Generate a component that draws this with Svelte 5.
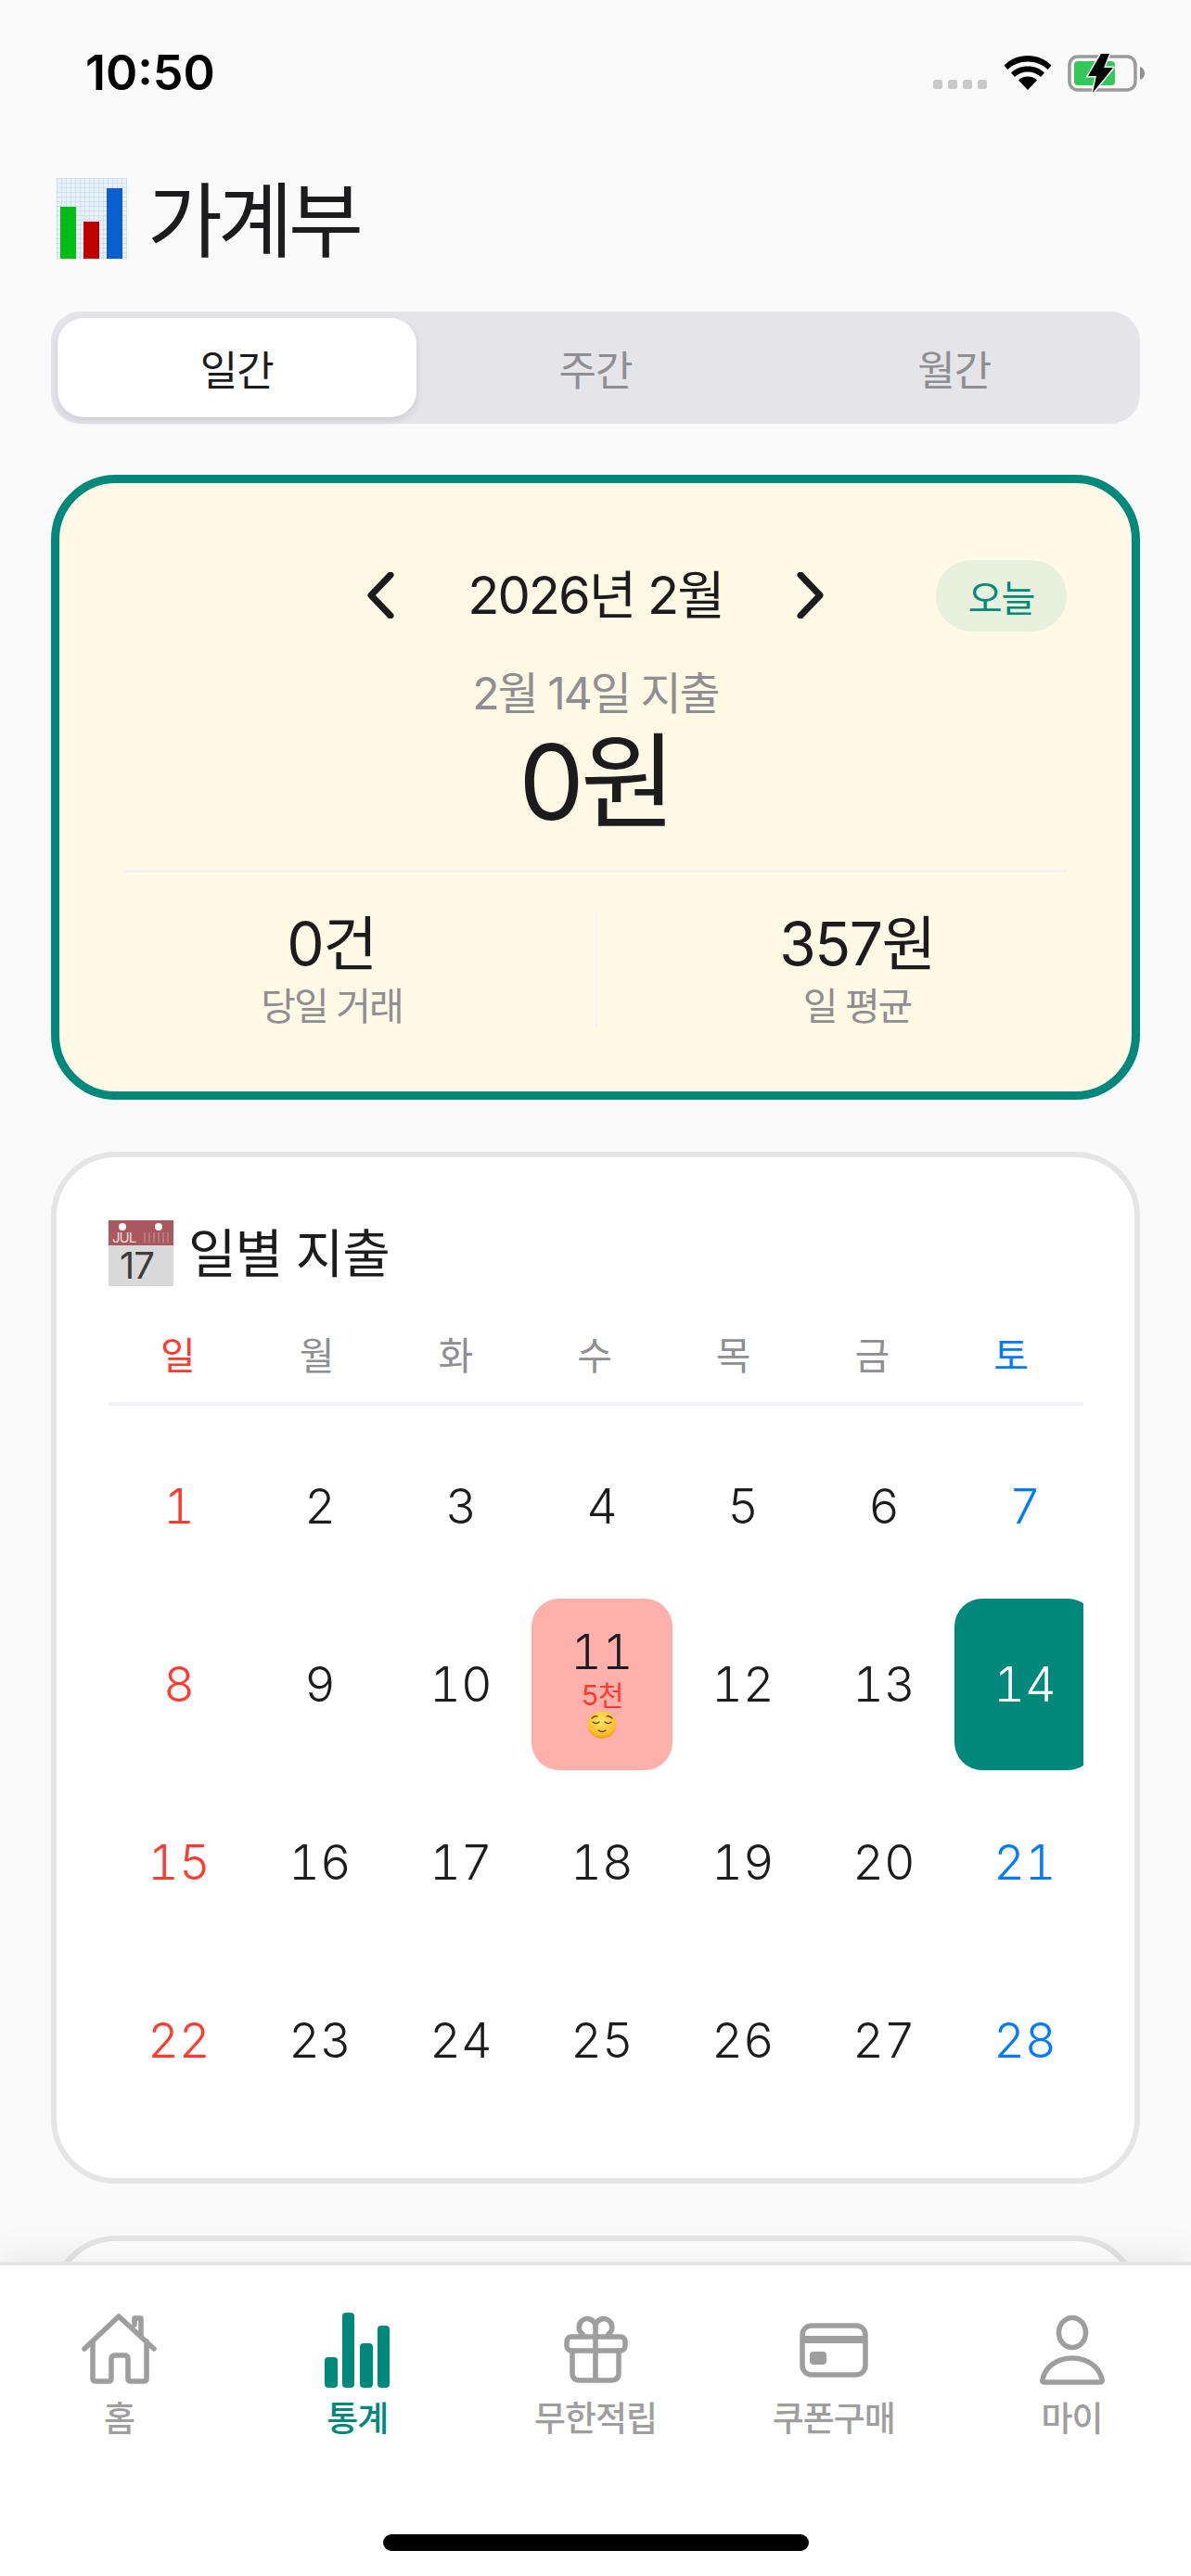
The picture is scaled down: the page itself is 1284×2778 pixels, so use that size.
<script>
  const tabs = ['일간', '주간', '월간'];
  const weekdays = ['일', '월', '화', '수', '목', '금', '토'];
  const days = Array.from({ length: 28 }, (_, i) => i + 1);
  const navItems = [
    { key: 'home', label: '홈' },
    { key: 'stats', label: '통계', active: true },
    { key: 'gift', label: '무한적립' },
    { key: 'card', label: '쿠폰구매' },
    { key: 'my', label: '마이' }
  ];

  function dayClass(d) {
    const col = (d - 1) % 7;
    let c = 'day';
    if (col === 0) c += ' sun';
    if (col === 6) c += ' sat';
    if (d === 11) c += ' spent';
    if (d === 14) c += ' selected';
    return c;
  }
</script>

<div class="screen">
  <div class="status">
    <span class="time">10:50</span>
    <div class="status-icons">
      <div class="signal"><i></i><i></i><i></i><i></i></div>
      <svg class="wifi" width="52" height="38" viewBox="0 0 52 38">
        <path d="M0.5 11.5C7 5 16 1 26 1s19 4 25.500 10.500L47.500 16C42 10.500 34.500 7.500 26 7.500S10 10.500 4.500 16z" fill="#000"/>
        <path d="M8 19.500C12.500 15 19 12.500 26 12.500s13.500 2.500 18 7L40 24c-3.500-3.500-8.500-5.500-14-5.500S15.500 20.500 12 24z" fill="#000"/>
        <path d="M16 27.500c2.500-2.500 6-4 10-4s7.500 1.500 10 4L26 38z" fill="#000"/>
      </svg>
      <svg class="battery" width="84" height="42" viewBox="0 0 84 42">
        <rect x="2" y="3" width="71" height="36" rx="9" fill="none" stroke="#9a9a9a" stroke-width="3.500"/>
        <rect x="7" y="8" width="44" height="26" rx="4" fill="#34c759"/>
        <path d="M78 14c3 1 5 3.500 5 7s-2 6-5 7z" fill="#8f8f8f"/>
        <path d="M36 0 22 24h9L27 42l22-27h-10l6-15z" fill="#000" stroke="#fafafa" stroke-width="3" paint-order="stroke"/>
      </svg>
    </div>
  </div>

  <h1 class="page-title">
    <svg width="76" height="88" viewBox="0 0 76 88">
      <defs>
        <pattern id="grid" width="5" height="5" patternUnits="userSpaceOnUse">
          <rect width="5" height="5" fill="#e8f0f8"/>
          <path d="M0 0H5M0 0V5" stroke="#bcd3ea" stroke-width="1"/>
        </pattern>
      </defs>
      <rect width="76" height="88" fill="url(#grid)"/>
      <rect x="4" y="31" width="17" height="56" fill="#03bd17"/>
      <rect x="29" y="47" width="17" height="40" fill="#bd0000"/>
      <rect x="54" y="11" width="17" height="76" fill="#0a5fd0"/>
    </svg>
    <span>가계부</span>
  </h1>

  <div class="tabs">
    {#each tabs as t, i}
      <div class="tab" class:active={i === 0}>{t}</div>
    {/each}
  </div>

  <section class="summary">
    <div class="month-row">
      <svg class="chev" width="30" height="50" viewBox="0 0 30 50"><path d="M26 3 5 25l21 22" /></svg>
      <span class="month">2026년 2월</span>
      <svg class="chev" width="30" height="50" viewBox="0 0 30 50"><path d="M4 3l21 22L4 47" /></svg>
      <button class="today">오늘</button>
    </div>
    <div class="sum-label">2월 14일 지출</div>
    <div class="sum-value">0원</div>
    <div class="stats">
      <div class="stat">
        <strong>0건</strong>
        <span>당일 거래</span>
      </div>
      <div class="stat">
        <strong>357원</strong>
        <span>일 평균</span>
      </div>
    </div>
  </section>

  <section class="card calendar">
    <h2>
      <svg width="70" height="71" viewBox="0 0 70 71" overflow="visible">
        <rect width="70" height="71" fill="#d9d9d9"/>
        <rect width="70" height="27" fill="#a9585f"/>
        <circle cx="15" cy="7" r="4" fill="#fff"/>
        <circle cx="54" cy="7" r="4" fill="#fff"/>
        <text x="4" y="24" font-size="15" fill="#f1dcdc" font-family="Inter, sans-serif">JUL</text>
        <g stroke="#c99a9d" stroke-width="1">
          <path d="M39 13v11M44 13v11M49 13v11M54 13v11M59 13v11M64 13v11"/>
        </g>
        <text x="12" y="63" font-size="40" fill="#3c3c3c" font-family="Inter, sans-serif">17</text>
      </svg>
      <span>일별 지출</span>
    </h2>
    <div class="week-head">
      {#each weekdays as w, i}
        <span class:sun={i === 0} class:sat={i === 6}>{w}</span>
      {/each}
    </div>
    <div class="day-clip">
      <div class="days">
        {#each days as d}
          <div class={dayClass(d)}>
            <span class="num">{d}</span>
            {#if d === 11}
              <span class="amount">5천</span>
              <svg class="face" width="32" height="30" viewBox="0 0 32 30">
                <defs>
                  <radialGradient id="faceFill" cx="50%" cy="35%" r="70%">
                    <stop offset="0%" stop-color="#ffe46a"/>
                    <stop offset="70%" stop-color="#fcc02e"/>
                    <stop offset="100%" stop-color="#ef8f10"/>
                  </radialGradient>
                </defs>
                <ellipse cx="16" cy="15" rx="15.500" ry="15" fill="url(#faceFill)"/>
                <path d="M6 12q3.500 3 7 0M19 12q3.500 3 7 0M5 8q3-3 6-2M27 8q-3-3-6-2M12 21q4 3 8 0" fill="none" stroke="#6b4410" stroke-width="1.300" stroke-linecap="round"/>
              </svg>
            {/if}
          </div>
        {/each}
      </div>
    </div>
  </section>

  <section class="card next-card"></section>

  <nav class="bottom-nav">
    <div class="nav-items">
      {#each navItems as item}
        <div class="nav-item" class:active={item.active}>
          <div class="nav-icon">
            {#if item.key === 'home'}
              <svg width="84" height="84" viewBox="0 0 84 84">
                <path d="M5 41 42 6l38 35M14 33v40q0 3 3 3h14q3 0 3-3V52q0-4 4-4h10q4 0 4 4v21q0 3 3 3h14q3 0 3-3V33M59 15V8h7v20" />
              </svg>
            {:else if item.key === 'stats'}
              <svg width="84" height="84" viewBox="0 0 84 84" class="fill">
                <rect x="7" y="50" width="14" height="33" rx="4"/>
                <rect x="26" y="2" width="13" height="81" rx="4"/>
                <rect x="45" y="35" width="14" height="48" rx="4"/>
                <rect x="64" y="16" width="13" height="67" rx="4"/>
              </svg>
            {:else if item.key === 'gift'}
              <svg width="84" height="84" viewBox="0 0 84 84">
                <rect x="11" y="28" width="63" height="15" rx="5"/>
                <path d="M17 43v24q0 8 8 8h34q8 0 8-8V43M42 16v59M42 16a9 9 0 1 0-14 9M42 16a9 9 0 1 1 14 9"/>
              </svg>
            {:else if item.key === 'card'}
              <svg width="84" height="84" viewBox="0 0 84 84">
                <rect x="8" y="16" width="68" height="53" rx="10"/>
                <path d="M8 31h68" stroke-width="8" stroke-linecap="butt"/>
                <rect x="16" y="44" width="18" height="14" rx="4" class="solid"/>
              </svg>
            {:else}
              <svg width="84" height="84" viewBox="0 0 84 84">
                <ellipse cx="42" cy="23.500" rx="14.500" ry="16"/>
                <path d="M12 77q-3 0-2-3c3-14 16-23 32-23s29 9 32 23q1 3-2 3z"/>
              </svg>
            {/if}
          </div>
          <span>{item.label}</span>
        </div>
      {/each}
    </div>
    <div class="home-bar"></div>
  </nav>
</div>

<style>
  :global(body) {
    margin: 0;
    background: #fafafa;
  }

  .screen {
    position: relative;
    width: 1284px;
    height: 2778px;
    overflow: hidden;
    background: #fafafa;
    color: #1c1c1e;
    font-family: Inter, 'Noto Sans CJK KR', sans-serif;
  }

  .status {
    display: flex;
    justify-content: space-between;
    align-items: flex-start;
    height: 192px;
    box-sizing: border-box;
    padding: 50px 49px 0 92px;
  }

  .time {
    font-size: 52px;
    line-height: 58px;
    font-weight: 600;
    color: #000;
  }

  .status-icons {
    display: flex;
    align-items: flex-start;
    padding-top: 8px;
  }

  .signal {
    display: flex;
    gap: 6px;
    margin: 28px 18px 0 0;
  }

  .signal i {
    width: 10px;
    height: 10px;
    border-radius: 3px;
    background: #c9c9c9;
  }

  .wifi {
    margin: 1px 17px 0 0;
  }

  .page-title {
    display: flex;
    align-items: center;
    gap: 22px;
    margin: 0 0 56px 61px;
    height: 88px;
    font-size: 88px;
    font-weight: 400;
    letter-spacing: -5px;
    color: #1c1c1e;
  }

  .page-title span {
    padding-bottom: 10px;
  }

  .page-title svg,
  .card h2 svg {
    flex: none;
  }

  .tabs {
    display: grid;
    grid-template-columns: repeat(3, 1fr);
    margin: 0 55px;
    padding: 7px;
    height: 121px;
    box-sizing: border-box;
    background: #e4e4e9;
    border-radius: 32px;
  }

  .tab {
    display: flex;
    align-items: center;
    justify-content: center;
    font-size: 44px;
    letter-spacing: -1px;
    color: #8e8e93;
    border-radius: 28px;
  }

  .tab.active {
    background: #fff;
    color: #1c1c1e;
    box-shadow: 0 4px 8px rgba(0, 0, 0, 0.1);
  }

  .summary {
    margin: 55px 55px 0;
    height: 674px;
    box-sizing: border-box;
    padding: 96px 70px 0;
    background: #fff9e6;
    border: 9px solid #00897b;
    border-radius: 70px;
    text-align: center;
  }

  .month-row {
    position: relative;
    display: flex;
    align-items: center;
    justify-content: center;
    gap: 79px;
    height: 50px;
  }

  .chev path {
    fill: none;
    stroke: #1c1c1e;
    stroke-width: 7;
    stroke-linecap: round;
    stroke-linejoin: round;
  }

  .month {
    font-size: 56px;
    letter-spacing: -2px;
    line-height: 50px;
    white-space: nowrap;
  }

  .today {
    position: absolute;
    right: 0;
    top: -13px;
    width: 141px;
    height: 77px;
    padding: 0;
    border: none;
    border-radius: 38px;
    background: #e8f0de;
    color: #00897b;
    font-family: inherit;
    font-size: 40px;
    letter-spacing: -1px;
  }

  .sum-label {
    margin-top: 55px;
    font-size: 48px;
    line-height: 52px;
    letter-spacing: -2px;
    color: #8e8e93;
  }

  .sum-value {
    margin-top: 9px;
    font-size: 112px;
    line-height: 120px;
    letter-spacing: -4px;
    font-weight: 400;
  }

  .stats {
    display: grid;
    grid-template-columns: 1fr 1fr;
    margin-top: 35px;
    padding-top: 41px;
    border-top: 3px solid #f2f2f7;
  }

  .stat {
    display: flex;
    flex-direction: column;
    align-items: center;
    height: 125px;
    box-sizing: border-box;
    padding: 1px 61px 0 0;
  }

  .stat + .stat {
    padding: 1px 0 0 54px;
    border-left: 2px solid #f2f2f7;
  }

  .stat strong {
    font-size: 64px;
    line-height: 70px;
    font-weight: 400;
    letter-spacing: -1.500px;
    white-space: nowrap;
  }

  .stat span {
    margin-top: 7px;
    font-size: 41px;
    line-height: 50px;
    letter-spacing: -2px;
    white-space: nowrap;
    color: #8e8e93;
  }

  .card {
    margin: 56px 55px 0;
    box-sizing: border-box;
    background: #fff;
    border: 6px solid #e5e5e5;
    border-radius: 70px;
  }

  .calendar {
    height: 1113px;
    padding: 68px 55px 0 56px;
  }

  .card h2 {
    display: flex;
    align-items: center;
    gap: 16px;
    height: 71px;
    margin: 0;
    font-size: 56px;
    font-weight: 400;
    letter-spacing: -1px;
  }

  .card h2 span {
    padding-bottom: 8px;
  }

  .week-head {
    display: grid;
    grid-template-columns: repeat(7, 1fr);
    margin-top: 51px;
    padding: 0 3px 26px 0;
    border-bottom: 4px solid #f2f2f7;
    text-align: center;
    font-size: 41px;
    line-height: 48px;
    color: #8e8e93;
  }

  .sun {
    color: #ff3b30;
  }

  .sat {
    color: #007aff;
  }

  .day-clip {
    overflow: hidden;
    margin-top: 16px;
  }

  .days {
    display: grid;
    grid-template-columns: repeat(7, 152px);
    grid-auto-rows: 185px;
    row-gap: 7px;
    width: 1064px;
  }

  .day {
    display: flex;
    flex-direction: column;
    align-items: center;
    justify-content: center;
    font-size: 52px;
    line-height: 60px;
    font-weight: 350;
    font-variant-numeric: tabular-nums;
    border-radius: 30px;
  }

  .day.spent {
    background: #ffb0ac;
    color: #1c1c1e;
    justify-content: flex-start;
    padding-top: 28px;
    box-sizing: border-box;
  }

  .amount {
    font-size: 30px;
    line-height: 32px;
    letter-spacing: -1px;
    font-weight: 400;
    color: #ff3b30;
  }

  .face {
    margin-top: 1px;
  }

  .day.selected {
    background: #00897b;
    color: #fff;
  }

  .next-card {
    height: 400px;
  }

  .bottom-nav {
    position: absolute;
    left: 0;
    right: 0;
    bottom: 0;
    height: 339px;
    box-sizing: border-box;
    background: #fff;
    border-top: 4px solid #e5e5e5;
    box-shadow: 0 -8px 36px rgba(0, 0, 0, 0.07);
  }

  .nav-items {
    display: grid;
    grid-template-columns: repeat(5, 1fr);
    padding-top: 49px;
  }

  .nav-item {
    display: flex;
    flex-direction: column;
    align-items: center;
    color: #9e9e9e;
    font-size: 37px;
    line-height: 44px;
    font-weight: 500;
    letter-spacing: -1px;
  }

  .nav-item.active {
    color: #00897b;
    font-weight: 500;
  }

  .nav-icon {
    height: 84px;
    margin-bottom: 11px;
  }

  .nav-icon svg {
    display: block;
    fill: none;
    stroke: currentColor;
    stroke-width: 5.500;
    stroke-linecap: round;
    stroke-linejoin: round;
  }

  .nav-icon svg.fill {
    fill: currentColor;
    stroke: none;
  }

  .nav-icon .solid {
    fill: currentColor;
    stroke: none;
  }

  .home-bar {
    position: absolute;
    left: 413px;
    bottom: 27px;
    width: 459px;
    height: 18px;
    border-radius: 9px;
    background: #000;
  }
</style>
